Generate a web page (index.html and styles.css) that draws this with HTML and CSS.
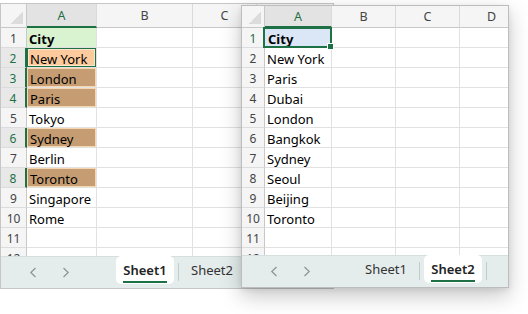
FILE: index.html
```html
<!DOCTYPE html>
<html>
<head>
<meta charset="utf-8">
<link rel="stylesheet" href="styles.css">
</head>
<body>
<div class="desk">
  <div class="win w1">
    <div class="grid">
      <div class="c corner"></div><div class="c h sel">A</div><div class="c h">B</div><div class="c h">C</div><div class="c h"></div>
      <div class="c r">1</div><div class="c hl-green b">City</div><div class="c"></div><div class="c"></div><div class="c"></div>
      <div class="c r sel">2</div><div class="c peach">New York</div><div class="c"></div><div class="c"></div><div class="c"></div>
      <div class="c r sel">3</div><div class="c tan">London</div><div class="c"></div><div class="c"></div><div class="c"></div>
      <div class="c r sel">4</div><div class="c tan">Paris</div><div class="c"></div><div class="c"></div><div class="c"></div>
      <div class="c r">5</div><div class="c">Tokyo</div><div class="c"></div><div class="c"></div><div class="c"></div>
      <div class="c r sel">6</div><div class="c tan">Sydney</div><div class="c"></div><div class="c"></div><div class="c"></div>
      <div class="c r">7</div><div class="c">Berlin</div><div class="c"></div><div class="c"></div><div class="c"></div>
      <div class="c r sel">8</div><div class="c tan">Toronto</div><div class="c"></div><div class="c"></div><div class="c"></div>
      <div class="c r">9</div><div class="c">Singapore</div><div class="c"></div><div class="c"></div><div class="c"></div>
      <div class="c r">10</div><div class="c">Rome</div><div class="c"></div><div class="c"></div><div class="c"></div>
      <div class="c r">11</div><div class="c"></div><div class="c"></div><div class="c"></div><div class="c"></div>
      <div class="c r">12</div><div class="c"></div><div class="c"></div><div class="c"></div><div class="c"></div>
    </div>
    <div class="tabbar">
      <div class="nav">
        <svg width="8" height="11" viewBox="0 0 8 11"><path d="M6.5 1 L1.8 5.5 L6.5 10" fill="none" stroke="#8c9494" stroke-width="1.2"/></svg>
        <svg width="8" height="11" viewBox="0 0 8 11"><path d="M1.5 1 L6.2 5.5 L1.5 10" fill="none" stroke="#8c9494" stroke-width="1.2"/></svg>
      </div>
      <div class="tab active"><span>Sheet1</span></div>
      <div class="sep"></div>
      <div class="tab"><span>Sheet2</span></div>
      <div class="sep"></div>
    </div>
  </div>

  <div class="win w2">
    <div class="grid">
      <div class="c corner"></div><div class="c h sel">A</div><div class="c h">B</div><div class="c h">C</div><div class="c h">D</div>
      <div class="c r green">1</div><div class="c act b">City</div><div class="c"></div><div class="c"></div><div class="c"></div>
      <div class="c r">2</div><div class="c">New York</div><div class="c"></div><div class="c"></div><div class="c"></div>
      <div class="c r">3</div><div class="c">Paris</div><div class="c"></div><div class="c"></div><div class="c"></div>
      <div class="c r">4</div><div class="c">Dubai</div><div class="c"></div><div class="c"></div><div class="c"></div>
      <div class="c r">5</div><div class="c">London</div><div class="c"></div><div class="c"></div><div class="c"></div>
      <div class="c r">6</div><div class="c">Bangkok</div><div class="c"></div><div class="c"></div><div class="c"></div>
      <div class="c r">7</div><div class="c">Sydney</div><div class="c"></div><div class="c"></div><div class="c"></div>
      <div class="c r">8</div><div class="c">Seoul</div><div class="c"></div><div class="c"></div><div class="c"></div>
      <div class="c r">9</div><div class="c">Beijing</div><div class="c"></div><div class="c"></div><div class="c"></div>
      <div class="c r">10</div><div class="c">Toronto</div><div class="c"></div><div class="c"></div><div class="c"></div>
      <div class="c r">11</div><div class="c"></div><div class="c"></div><div class="c"></div><div class="c"></div>
      <div class="c r">12</div><div class="c"></div><div class="c"></div><div class="c"></div><div class="c"></div>
    </div>
    <div class="tabbar">
      <div class="nav">
        <svg width="8" height="11" viewBox="0 0 8 11"><path d="M6.5 1 L1.8 5.5 L6.5 10" fill="none" stroke="#8c9494" stroke-width="1.2"/></svg>
        <svg width="8" height="11" viewBox="0 0 8 11"><path d="M1.5 1 L6.2 5.5 L1.5 10" fill="none" stroke="#8c9494" stroke-width="1.2"/></svg>
      </div>
      <div class="tab"><span>Sheet1</span></div>
      <div class="sep"></div>
      <div class="tab active"><span>Sheet2</span></div>
      <div class="sep"></div>
    </div>
  </div>
</div>
</body>
</html>
```
FILE: styles.css
```css
html, body {
  margin: 0;
  padding: 0;
  background: #ffffff;
}

body {
  font-family: "Noto Sans", "Open Sans", sans-serif;
}

.desk {
  position: relative;
  width: 528px;
  height: 314px;
  overflow: hidden;
}

.win {
  position: absolute;
  box-sizing: border-box;
  background: #ffffff;
  border: 1px solid #c6c6c6;
  display: flex;
  flex-direction: column;
  overflow: hidden;
}

.w1 {
  left: 0;
  top: 3px;
  width: 334px;
  height: 286px;
}

.w2 {
  left: 241px;
  top: 5px;
  width: 268px;
  height: 283px;
  border-color: #bdbdbd;
  box-shadow: 0 8px 20px rgba(0, 0, 0, 0.22), 0 2px 6px rgba(0, 0, 0, 0.08);
}

.grid {
  flex: 1;
  min-height: 0;
  display: grid;
  grid-auto-rows: 20px;
  align-content: start;
  overflow: hidden;
}

.w1 .grid {
  grid-template-columns: 26px 70px 96px 64px 96px;
  grid-template-rows: 24px;
}

.w2 .grid {
  grid-template-columns: 23px 67px 64px 64px 64px;
  grid-template-rows: 22px;
}

.c {
  box-sizing: border-box;
  border-right: 1px solid #e1e1e1;
  border-bottom: 1px solid #e1e1e1;
  font-size: 13px;
  line-height: 20px;
  padding-top: 1px;
  padding-left: 2px;
  white-space: nowrap;
  overflow: hidden;
  color: #000;
}

.b {
  font-weight: 700;
}

.h {
  background: #f5f5f5;
  border-right: 1px solid #dadada;
  border-bottom: 1px solid #c8c8c8;
  text-align: center;
  padding: 0;
  font-size: 12.5px;
  line-height: 24px;
  color: #444;
}

.w2 .h {
  line-height: 22px;
}

.h.sel {
  background: #e3e3e3;
  color: #1e7145;
  border-bottom: 2px solid #1e7145;
}

.corner {
  background-color: #f5f5f5;
  border-right: 1px solid #c8c8c8;
  border-bottom: 1px solid #c8c8c8;
  background-image: linear-gradient(135deg, transparent 50%, #dcdcdc 50%);
  background-size: 12px 12px;
  background-position: right 3px bottom 3px;
  background-repeat: no-repeat;
  padding: 0;
}

.r {
  background: #f5f5f5;
  border-right: 1px solid #c8c8c8;
  border-bottom: 1px solid #dcdcdc;
  text-align: center;
  padding: 1px 0 0;
  font-size: 12px;
  color: #444;
}

.r.sel {
  background: #e8e8e8;
  color: #1e7145;
  border-right: 2px solid #1e7145;
}

.r.green {
  color: #1e7145;
}

.hl-green {
  background: #d9f2d0;
}

.peach {
  background: #fdca9d;
  box-shadow: inset 0 0 0 1px #1e7145, inset 0 0 0 2px #fde4cc;
  padding-left: 3px;
}

.tan {
  background: #c69c72;
  box-shadow: inset 0 0 0 1px #f7d6b2;
  padding-left: 3px;
}

.act {
  position: relative;
  overflow: visible;
  background: #dbe7f6;
  padding-left: 3px;
}

.act::after {
  content: "";
  position: absolute;
  left: -2px;
  top: -1px;
  right: -1px;
  bottom: -1px;
  border: 2px solid #1e7145;
}

.act::before {
  content: "";
  position: absolute;
  right: -3px;
  bottom: -3px;
  width: 5px;
  height: 5px;
  background: #1e7145;
  border: 1px solid #fff;
  box-sizing: content-box;
  z-index: 2;
}

.tabbar {
  height: 32px;
  flex: none;
  box-sizing: border-box;
  background: #e4ecec;
  border-top: 1px solid #d6dede;
  display: flex;
  align-items: flex-start;
}

.nav {
  width: 115px;
  flex: none;
  display: flex;
  gap: 25px;
  padding: 10px 0 0 28px;
  box-sizing: border-box;
}

.nav svg {
  display: block;
}

.tab {
  width: 58px;
  height: 28px;
  margin-top: -1px;
  box-sizing: border-box;
  border-radius: 5px;
  display: flex;
  justify-content: center;
  font-size: 13px;
  color: #333;
}

.tab span {
  display: block;
  line-height: 29px;
  height: 25px;
}

.tab.active {
  background: #ffffff;
  font-weight: 600;
  color: #222;
}

.tab.active span {
  border-bottom: 2px solid #1e7145;
}

.sep {
  width: 1px;
  height: 18px;
  margin: 6px 4px 0;
  background: #c4cbcb;
  flex: none;
}
```
